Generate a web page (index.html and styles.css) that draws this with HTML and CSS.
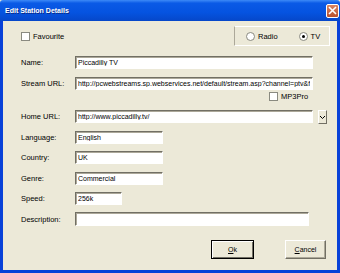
FILE: index.html
```html
<!DOCTYPE html>
<html lang="en">
<head>
    <meta charset="UTF-8">
    <title>Edit Station Details</title>
    <link rel="stylesheet" href="styles.css">
</head>
<body>
    <div class="window">
        <div class="titlebar">
            <span class="title">Edit Station Details</span>
            <span class="close">
                <svg width="9" height="9" viewBox="0 0 9 9"><path d="M1 1 L8 8 M8 1 L1 8" stroke="#fff" stroke-width="1.6"/></svg>
            </span>
        </div>
        <div class="frame">
            <div class="top">
                <label class="check-label"><span class="check"></span>Favourite</label>
                <div class="group">
                    <label class="radio-label"><span class="radio"></span>Radio</label>
                    <label class="radio-label"><span class="radio on"></span>TV</label>
                </div>
            </div>
            <div class="form">
                <div class="row">
                    <span class="lbl">Name:</span>
                    <input class="field wide" type="text" value="Piccadilly TV">
                </div>
                <div class="row">
                    <span class="lbl">Stream URL:</span>
                    <input class="field wide" type="text" value="http://pcwebstreams.sp.webservices.net/default/stream.asp?channel=ptv&amp;f">
                </div>
                <div class="row mp3">
                    <label class="check-label"><span class="check"></span>MP3Pro</label>
                </div>
                <div class="row home">
                    <span class="lbl">Home URL:</span>
                    <input class="field wide" type="text" value="http://www.piccadilly.tv/">
                    <span class="drop">
                        <svg width="5" height="4" viewBox="0 0 5 4"><path d="M0 1 L2.5 3.5 L5 1" stroke="#000" stroke-width="1" fill="none"/></svg>
                    </span>
                </div>
                <div class="row">
                    <span class="lbl">Language:</span>
                    <input class="field mid" type="text" value="English">
                </div>
                <div class="row">
                    <span class="lbl">Country:</span>
                    <input class="field mid" type="text" value="UK">
                </div>
                <div class="row">
                    <span class="lbl">Genre:</span>
                    <input class="field mid" type="text" value="Commercial">
                </div>
                <div class="row">
                    <span class="lbl">Speed:</span>
                    <input class="field short" type="text" value="256k">
                </div>
                <div class="row">
                    <span class="lbl">Description:</span>
                    <input class="field desc" type="text" value="">
                </div>
            </div>
            <div class="buttons">
                <button class="btn default"><u>O</u>k</button>
                <button class="btn"><u>C</u>ancel</button>
            </div>
        </div>
    </div>
</body>
</html>
```

FILE: styles.css
```css
body {
    margin: 0;
    font-family: "Liberation Sans", Arial, sans-serif;
    font-size: 7.5px;
    color: #000;
    background-color: #ece9d8;
}
.window {
    width: 340px;
    height: 273px;
    display: flex;
    flex-direction: column;
}
.titlebar {
    height: 21px;
    display: flex;
    align-items: center;
    justify-content: space-between;
    padding: 0 1px 0 5px;
    background: linear-gradient(#3d8af7, #0a5ae6 15%, #0553e0 60%, #0647c9);
    border-radius: 3px 3px 0 0;
    box-sizing: border-box;
}
.title {
    color: white;
    font-weight: bold;
    font-size: 7px;
    text-shadow: 1px 1px 0 #0a2a8a;
}
.close {
    width: 13px;
    height: 14px;
    display: flex;
    align-items: center;
    justify-content: center;
    background: linear-gradient(#d98461, #b9502d);
    border: 1px solid #fff;
    border-radius: 2px;
    box-sizing: border-box;
}
.frame {
    flex: 1;
    border: 3px solid #0841d8;
    border-top: none;
    background-color: #ece9d8;
    display: flex;
    flex-direction: column;
}
.top {
    display: flex;
    justify-content: space-between;
    align-items: center;
    margin-top: 5px;
    height: 20px;
    padding-left: 18px;
    padding-right: 7px;
}
.check-label, .radio-label {
    display: flex;
    align-items: center;
    gap: 3px;
}
.check {
    width: 7px;
    height: 7px;
    background: white;
    border: 1px solid #8a8a80;
}
.group {
    width: 96px;
    height: 20px;
    box-sizing: border-box;
    border: 1px solid #fff;
    border-left-color: #aca899;
    display: flex;
    align-items: center;
    gap: 21px;
    padding-left: 11px;
}
.radio {
    width: 7px;
    height: 7px;
    border-radius: 50%;
    background: white;
    border: 1px solid #8a8a80;
    display: flex;
    align-items: center;
    justify-content: center;
}
.radio.on::after {
    content: "";
    width: 3px;
    height: 3px;
    border-radius: 50%;
    background: #000;
}
.form {
    margin-top: 10px;
    padding-left: 18px;
    display: flex;
    flex-direction: column;
    gap: 7.5px;
}
.row {
    display: flex;
    align-items: center;
    height: 13px;
}
.lbl {
    width: 54px;
}
.row.mp3 {
    height: 9px;
    margin-top: -5.5px;
    padding-left: 248px;
}
.row.home {
    margin-top: 2px;
}
.field {
    height: 13px;
    box-sizing: border-box;
    margin: 0;
    padding: 0 2px;
    font-family: "Liberation Sans", Arial, sans-serif;
    font-size: 7px;
    background: white;
    border: 1px solid;
    border-color: #716f64 #fff #fff #716f64;
    box-shadow: inset 1px 1px 0 #aca899;
    outline: none;
}
.wide {
    width: 238px;
}
.mid {
    width: 88px;
}
.short {
    width: 47px;
}
.desc {
    width: 234px;
    height: 14px;
}
.drop {
    width: 9px;
    height: 14px;
    margin-left: 5px;
    box-sizing: border-box;
    border: 1px solid;
    border-color: #fff #716f64 #716f64 #fff;
    display: flex;
    align-items: center;
    justify-content: center;
}
.buttons {
    display: flex;
    justify-content: flex-end;
    gap: 31px;
    margin-top: 14px;
    padding-right: 11px;
}
.btn {
    height: 19px;
    width: 41px;
    padding: 0;
    font-family: "Liberation Sans", Arial, sans-serif;
    font-size: 7px;
    background: #ece9d8;
    border: 1px solid;
    border-color: #fff #716f64 #716f64 #fff;
    box-shadow: inset -1px -1px 0 #aca899;
}
.btn.default {
    width: 43px;
    border: 1px solid #000;
    box-shadow: inset 1px 1px 0 #fff, inset -1px -1px 0 #716f64;
}
```
